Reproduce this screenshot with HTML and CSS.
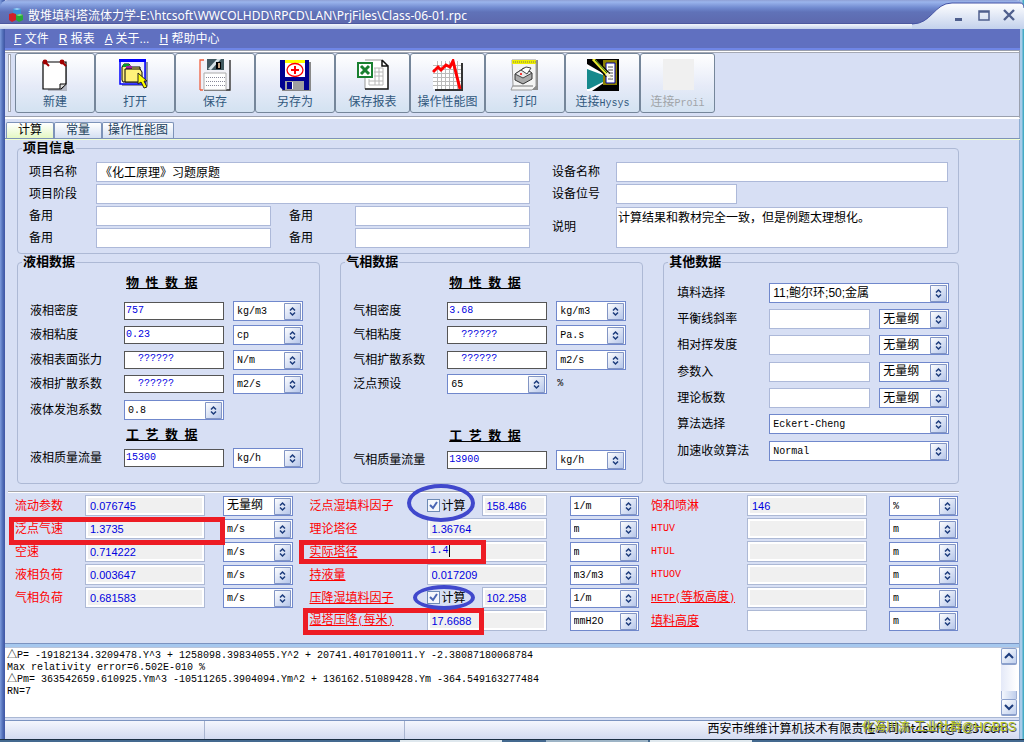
FILE: index.html
```html
<!DOCTYPE html>
<html lang="zh-CN">
<head>
<meta charset="utf-8">
<title>散堆填料塔流体力学</title>
<link rel="stylesheet" href="styles.css">
</head>
<body>
<div class="window">
  <header class="titlebar">
    <svg class="app-icon" width="16" height="16" viewBox="0 0 16 16" aria-hidden="true"><path d="M5 2l4-1 4 1v5l-4 2-4-2z" fill="#3c8fd8"/><path d="M5 2l4 1 4-1-4-1z" fill="#9ed0f5"/><path d="M1 7l4-1 3 1v6l-4 2-3-2z" fill="#d02028"/><path d="M8 8l4-1 3 1v5l-4 2-3-2z" fill="#28a838"/><path d="M8 8l4-1 3 1-4 1z" fill="#8be08b"/></svg>
    <h1 class="title">散堆填料塔流体力学-E:\htcsoft\WWCOLHDD\RPCD\LAN\PrjFiles\Class-06-01.rpc</h1>
    <div class="captions">
      <svg class="caption-shape" width="112" height="29" viewBox="0 0 112 29" aria-hidden="true"><defs><linearGradient id="cap" x1="0" y1="0" x2="0" y2="1"><stop offset="0" stop-color="#fff"/><stop offset="1" stop-color="#c3d1ec"/></linearGradient></defs><path d="M0 24C20 24 22 3 40 3H108Q112 3 112 8V29H0z" fill="url(#cap)"/><path d="M0 24C20 24 22 3 40 3H108Q112 3 112 8" fill="none" stroke="#4453a4"/></svg>
      <button class="cap-btn" aria-label="最小化"><svg width="14" height="14"><path d="M3 9h7v3H3z" fill="#4f5f8d"/></svg></button>
      <button class="cap-btn" aria-label="最大化"><svg width="14" height="14"><path d="M2 2h10v9H2zM2 3h10" fill="none" stroke="#4f5f8d" stroke-width="1.5"/></svg></button>
      <button class="cap-btn" aria-label="关闭"><svg width="14" height="14"><path d="M2 1l10 10M12 1L2 11" stroke="#4f5f8d" stroke-width="2.4"/></svg></button>
    </div>
  </header>

  <nav class="menu">
    <a href="#"><u>F</u> 文件</a><a href="#"><u>R</u> 报表</a><a href="#"><u>A</u> 关于...</a><a href="#"><u>H</u> 帮助中心</a>
  </nav>

  <div class="toolbar">
    <span class="grip"></span>
    <button class="tool">
      <svg width="32" height="32" viewBox="0 0 32 32"><path d="M7 6h21v26H9z" fill="#b4b8c4"/><path d="M4 3h23v22l-5 5H4z" fill="#fff" stroke="#000" stroke-width="1.2"/><path d="M21 30v-5h6" fill="#ddd" stroke="#000"/><circle cx="6" cy="3" r="2.4" fill="#a00000"/><circle cx="23" cy="3" r="2.4" fill="#a00000"/><path d="M7 4l3 3M24 4l3 3" stroke="#a00000" stroke-width="2"/></svg>新建</button>
    <button class="tool">
      <svg width="32" height="32" viewBox="0 0 32 32"><path d="M3 3h26v24H3z" fill="#9094a0"/><path d="M1 1h25v24H1z" fill="#eef" stroke="#00f" stroke-width="1.5"/><path d="M0 0h27v3H0z" fill="#00f"/><path d="M3 21V8l2-3h5l2 3h9v15H4z" fill="#ffef80" stroke="#000"/><path d="M4 5h6v3H4z" fill="#0a9a30"/><path d="M7 7h6v3H7z" fill="#a020a0"/><path d="M6 10h15l2 3v10H6z" fill="#fff27a" stroke="#000"/><path d="M19 14l9 8-3 0 3 6-3 1-3-6-3 2z" fill="#ff0" stroke="#222"/></svg>打开</button>
    <button class="tool">
      <svg width="32" height="32" viewBox="0 0 32 32"><path d="M1 1h31v31H3z" fill="#f2f2f8"/><path d="M1 31V1h4M1 31h3" fill="none" stroke="#f06040" stroke-width="1.3"/><path d="M31 1v30H5" fill="none" stroke="#222" stroke-width="1.3"/><path d="M8 0h17v11H8z" fill="#405860"/><path d="M9 10l9-10h4L12 11z" fill="#d8e4e8"/><path d="M17 3h5v7h-5z" fill="#000"/><path d="M19 4h2v5h-2z" fill="#c8a888"/><path d="M5 14h22v17H5z" fill="#fff" stroke="#aaa"/><path d="M7 18.500h19M7 22.500h19M7 26.500h19" stroke="#889" stroke-dasharray="1 1"/></svg>保存</button>
    <button class="tool">
      <svg width="32" height="32" viewBox="0 0 32 32"><path d="M3 3h29v29H3z" fill="#888"/><path d="M1 1h29v30H4l-3-3z" fill="#000090"/><path d="M6 1h20v17H6z" fill="#fff"/><path d="M6 1h20v3H6z" fill="#ff0"/><ellipse cx="16" cy="11" rx="8" ry="6.5" fill="#fff" stroke="#f00" stroke-width="1.3"/><path d="M16 7v8M12 11h8" stroke="#f00" stroke-width="2"/><path d="M6 22h19v9H6z" fill="#a0a0a0"/><path d="M8 23h5v7H8z" fill="#000090"/><path d="M13 23h1v7h-1z" fill="#fff"/></svg>另存为</button>
    <button class="tool narrow">
      <svg width="32" height="32" viewBox="0 0 32 32"><path d="M8 1h17l6 6v23H8z" fill="#fff"/><path d="M8 1h17M8 18v12" stroke="#999"/><path d="M25 1v6h6v23H8M25 1l6 6" fill="none" stroke="#111" stroke-width="1.5"/><path d="M17 9h9v17H12v-6M17 13h9M17 17h9M12 22h14M18 9v17M22 9v17" fill="none" stroke="#b8b8b8"/><path d="M1 4h14v14H1z" fill="#fff" stroke="#198030" stroke-width="2"/><path d="M4 7l8 8M12 7l-8 8" stroke="#198030" stroke-width="3"/></svg>保存报表</button>
    <button class="tool narrow">
      <svg width="32" height="32" viewBox="0 0 32 32"><path d="M3 4h28v28H3z" fill="#333"/><path d="M1 2h28v28H1z" fill="#fff"/><path d="M1 6.500h28M1 10.500h28M1 14.500h28M1 18.500h28M1 22.500h28M1 26.500h28M5.500 2v28M9.500 2v28M13.500 2v28M17.500 2v28M21.500 2v28M25.500 2v28" stroke="#bbb"/><path d="M1 13l5-5 3 3 5-5 4 2 3-6 7 28" fill="none" stroke="#f00" stroke-width="3"/></svg>操作性能图</button>
    <button class="tool">
      <svg width="32" height="32" viewBox="0 0 32 32"><path d="M4 1h25v30H8z" fill="#8c8c8c"/><path d="M3 1h24v26l-4 4H2l2-5z" fill="#f4f4f4" stroke="#999"/><path d="M3 1h24v4H3z" fill="#ee0"/><path d="M4 3h23" stroke="#776" stroke-dasharray="1 1"/><path d="M6 15l9-6 8 5v6l-9 5-8-4z" fill="#aaa" stroke="#333"/><path d="M6 15l8 4 9-5-8-5z" fill="#e8e8e8" stroke="#444"/><path d="M12 11l5-3 5 1-4 6z" fill="#fff" stroke="#444"/><circle cx="12" cy="15" r="1" fill="#f00"/><path d="M4 27h20" stroke="#777"/></svg>打印</button>
    <button class="tool narrow">
      <svg width="32" height="32" viewBox="0 0 32 32"><path d="M0 0h32v32H0z" fill="#000"/><path d="M0 5l24 14L5 32H0z" fill="#fff"/><path d="M0 10l24 9L2 30H0z" fill="#16898c"/><path d="M16 1h14v25H16z" fill="#8c8000"/><path d="M19 4h9v20h-9z" fill="#fff" stroke="#0000a0"/><path d="M21 8h5M21 11h5M21 14h5M21 17h5M21 20h5" stroke="#555"/><path d="M5 0l16 16" stroke="#000" stroke-width="6"/><path d="M6 0l14 15" stroke="#eee830" stroke-width="3"/><path d="M8 1l12 13" stroke="#186820"/><path d="M18 16l3-3 4 7z" fill="#f4f0d0"/></svg><span>连接<span class="mono">Hysys</span></span></button>
    <button class="tool narrow" disabled>
      <svg width="32" height="32" viewBox="0 0 32 32"><path d="M1 0h31v31H1z" fill="#f0f0f0"/></svg><span>连接<span class="mono">Proii</span></span></button>
  </div>

  <div class="tabs" role="tablist">
    <button class="tab active" role="tab">计算</button><button class="tab" role="tab">常量</button><button class="tab wide" role="tab">操作性能图</button>
  </div>

  <main class="page">
    <fieldset class="group project">
      <legend>项目信息</legend>
      <div class="project-grid">
        <label for="p1">项目名称</label><input class="box long" id="p1" value="《化工原理》习题原题">
        <label class="c7" for="p2">设备名称</label><input class="box c8" id="p2">
        <label for="p3">项目阶段</label><input class="box long" id="p3">
        <label class="c7" for="p4">设备位号</label><input class="box c8 short" id="p4">
        <label for="p5">备用</label><input class="box" id="p5">
        <label class="c4" for="p6">备用</label><input class="box" id="p6">
        <label class="c7 two" for="p9">说明</label><textarea class="box c8 two" id="p9">计算结果和教材完全一致，但是例题太理想化。</textarea>
        <label for="p7">备用</label><input class="box" id="p7">
        <label class="c4" for="p8">备用</label><input class="box" id="p8">
      </div>
    </fieldset>

    <div class="groups">
      <fieldset class="group">
        <legend>液相数据</legend>
        <div class="fields liquid">
          <h2>物&ensp;性&ensp;数&ensp;据</h2>
          <label for="l1">液相密度</label><input class="num" id="l1" value="757"><select aria-label="液相密度单位"><option>kg/m3</option></select>
          <label for="l2">液相粘度</label><input class="num" id="l2" value="0.23"><select aria-label="液相粘度单位"><option>cp</option></select>
          <label for="l3">液相表面张力</label><input class="num unknown" id="l3" value="??????"><select aria-label="液相表面张力单位"><option>N/m</option></select>
          <label for="l4">液相扩散系数</label><input class="num unknown" id="l4" value="??????"><select aria-label="液相扩散系数单位"><option>m2/s</option></select>
          <label for="l5">液体发泡系数</label><select id="l5"><option>0.8</option></select>
          <h2>工&ensp;艺&ensp;数&ensp;据</h2>
          <label for="l6">液相质量流量</label><input class="num" id="l6" value="15300"><select aria-label="液相质量流量单位"><option>kg/h</option></select>
        </div>
      </fieldset>
      <fieldset class="group">
        <legend>气相数据</legend>
        <div class="fields gas">
          <h2>物&ensp;性&ensp;数&ensp;据</h2>
          <label for="g1">气相密度</label><input class="num" id="g1" value="3.68"><select aria-label="气相密度单位"><option>kg/m3</option></select>
          <label for="g2">气相粘度</label><input class="num unknown" id="g2" value="??????"><select aria-label="气相粘度单位"><option>Pa.s</option></select>
          <label for="g3">气相扩散系数</label><input class="num unknown" id="g3" value="??????"><select aria-label="气相扩散系数单位"><option>m2/s</option></select>
          <label for="g4">泛点预设</label><select id="g4"><option>65</option></select><span class="mono percent">%</span>
          <h2>工&ensp;艺&ensp;数&ensp;据</h2>
          <label for="g5">气相质量流量</label><input class="num" id="g5" value="13900"><select aria-label="气相质量流量单位"><option>kg/h</option></select>
        </div>
      </fieldset>
      <fieldset class="group other-group">
        <legend>其他数据</legend>
        <div class="fields other">
          <label for="o1">填料选择</label><select class="wide cjk" id="o1"><option>11;鲍尔环;50;金属</option></select>
          <label for="o2">平衡线斜率</label><input class="box" id="o2"><select class="cjk" aria-label="平衡线斜率单位"><option>无量纲</option></select>
          <label for="o3">相对挥发度</label><input class="box" id="o3"><select class="cjk" aria-label="相对挥发度单位"><option>无量纲</option></select>
          <label for="o4">参数入</label><input class="box" id="o4"><select class="cjk" aria-label="参数入单位"><option>无量纲</option></select>
          <label for="o5">理论板数</label><input class="box" id="o5"><select class="cjk" aria-label="理论板数单位"><option>无量纲</option></select>
          <label for="o6">算法选择</label><select class="wide" id="o6"><option>Eckert-Cheng</option></select>
          <label for="o7">加速收敛算法</label><select class="wide" id="o7"><option>Normal</option></select>
        </div>
      </fieldset>
    </div>

    <section class="results">
      <div class="res first">
        <label for="r1">流动参数</label><input class="out" id="r1" readonly value="0.076745"><select class="cjk" aria-label="流动参数单位"><option>无量纲</option></select>
        <label for="r2">泛点气速</label><input class="out" id="r2" readonly value="1.3735"><select aria-label="泛点气速单位"><option>m/s</option></select>
        <label for="r3">空速</label><input class="out" id="r3" readonly value="0.714222"><select aria-label="空速单位"><option>m/s</option></select>
        <label for="r4">液相负荷</label><input class="out" id="r4" readonly value="0.003647"><select aria-label="液相负荷单位"><option>m/s</option></select>
        <label for="r5">气相负荷</label><input class="out" id="r5" readonly value="0.681583"><select aria-label="气相负荷单位"><option>m/s</option></select>
      </div>
      <div class="res second">
        <label for="s1">泛点湿填料因子</label><div class="calc"><label class="check"><input type="checkbox" checked>计算</label><input class="out" id="s1" readonly value="158.486"></div><select aria-label="泛点湿填料因子单位"><option>1/m</option></select>
        <label for="s2">理论塔径</label><input class="out" id="s2" readonly value="1.36764"><select aria-label="理论塔径单位"><option>m</option></select>
        <label for="s3"><u>实际塔径</u></label><div class="editing"><input class="out typed" id="s3" value="1.4"><span class="caret"></span></div><select aria-label="实际塔径单位"><option>m</option></select>
        <label for="s4"><u>持液量</u></label><input class="out" id="s4" readonly value="0.017209"><select aria-label="持液量单位"><option>m3/m3</option></select>
        <label for="s5"><u>压降湿填料因子</u></label><div class="calc"><label class="check"><input type="checkbox" checked>计算</label><input class="out" id="s5" readonly value="102.258"></div><select aria-label="压降湿填料因子单位"><option>1/m</option></select>
        <label for="s6"><u>湿塔压降<span class="mono">(</span>每米<span class="mono">)</span></u></label><input class="out" id="s6" readonly value="17.6688"><select aria-label="湿塔压降单位"><option>mmH2O</option></select>
      </div>
      <div class="res third">
        <label for="t1">饱和喷淋</label><input class="out" id="t1" readonly value="146"><select aria-label="饱和喷淋单位"><option>%</option></select>
        <label class="mono" for="t2">HTUV</label><input class="out" id="t2" readonly><select aria-label="HTUV单位"><option>m</option></select>
        <label class="mono" for="t3">HTUL</label><input class="out" id="t3" readonly><select aria-label="HTUL单位"><option>m</option></select>
        <label class="mono" for="t4">HTUOV</label><input class="out" id="t4" readonly><select aria-label="HTUOV单位"><option>m</option></select>
        <label for="t5"><u><span class="mono">HETP(</span>等板高度<span class="mono">)</span></u></label><input class="out" id="t5" readonly><select aria-label="等板高度单位"><option>m</option></select>
        <label for="t6"><u>填料高度</u></label><input class="out blank" id="t6"><select aria-label="填料高度单位"><option>m</option></select>
      </div>
      <span class="mark m1"></span><span class="mark m2"></span><span class="mark m3"></span>
      <span class="ring r1"></span><span class="ring r2"></span>
    </section>
  </main>

  <div class="log">
    <textarea class="log-text" aria-label="输出" readonly>△P= -19182134.3209478.Y^3 + 1258098.39834055.Y^2 + 20741.4017010011.Y -2.38087180068784
Max relativity error=6.502E-010 %
△Pm= 363542659.610925.Ym^3 -10511265.3904094.Ym^2 + 136162.51089428.Ym -364.549163277484
RN=7</textarea>
    <div class="scroll">
      <button class="arrow" aria-label="向上"><svg width="10" height="8"><path d="M1 6l4-4 4 4" fill="none" stroke="#1d3c7c" stroke-width="2"/></svg></button>
      <span class="thumb"></span>
      <button class="arrow" aria-label="向下"><svg width="10" height="8"><path d="M1 2l4 4 4-4" fill="none" stroke="#1d3c7c" stroke-width="2"/></svg></button>
    </div>
  </div>

  <footer class="status">
    <span class="pane"></span><span class="pane"></span>
    <span class="company">西安市维维计算机技术有限责任公司,htcsoft@163.com</span>
    <span class="stamp">化海川流-工业社群@HGBBS</span>
  </footer>
</div>
<div class="taskbar"><span></span><span class="next"></span><span></span></div>
</body>
</html>
```

FILE: styles.css
```css
* { box-sizing: border-box; }
body {
  margin: 0;
  min-height: 100vh;
  display: flex;
  flex-direction: column;
  background: #1c5a9a;
  font: 12px/16px "Liberation Sans", "Noto Sans CJK SC", sans-serif;
  color: #000;
}
button, input, select, textarea { font: inherit; color: inherit; margin: 0; border-radius: 0; min-width: 0; }
.mono { font-family: "Liberation Mono", "Noto Sans CJK SC", monospace; font-size: 10px; }

.window {
  flex: 1;
  display: flex;
  flex-direction: column;
  padding: 0 4px 0 5px;
  background: linear-gradient(90deg, #7d9bdc 0, #4d6ab4 3px, #4055a4 5px, #d7dff4 5px, #d7dff4 calc(100% - 5px), #7590bd calc(100% - 5px), #a9cbe9 calc(100% - 4px), #a9cbe9 calc(100% - 2px), #45aac5 calc(100% - 1px));
}

.titlebar {
  display: flex;
  align-items: flex-start;
  height: 29px;
  margin: 0 -4px 0 -5px;
  padding: 7px 0 0 8px;
  border-radius: 8px 8px 0 0;
  background: linear-gradient(#8f9fd4 0, #9ab4ec 2px, #6f88ce 8px, #6072b8 12px, #5d69ae 23px, #3c4890 24px, #f4f7fd 24px, #c3d1ec 29px);
  position: relative;
}
.app-icon { margin-right: 4px; }
.title {
  flex: 1;
  margin: 0;
  font: 12px/17px "Noto Sans", "Noto Sans CJK SC", sans-serif;
  color: #fff;
  white-space: nowrap;
}
.captions { display: flex; gap: 11px; padding: 2px 8px 0 0; }
.caption-shape { position: absolute; right: 0; top: 0; }
.cap-btn { position: relative; width: 14px; height: 14px; padding: 0; border: 0; background: none; }
.cap-btn svg { display: block; }

.menu {
  display: flex;
  gap: 10px;
  height: 21px;
  padding: 2px 9px 0;
  background: #6070c0;
  border-bottom: 2px solid #6f86e6;
}
.menu a { color: #fff; text-decoration: none; }

.toolbar {
  display: flex;
  height: 69px;
  padding: 2px 3px 5px;
  border: 1px solid #9aa0ae;
  border-left: 0;
  border-bottom-width: 2px;
  border-bottom-color: #fff;
  box-shadow: inset 0 1px 0 #fff, inset 0 2px 0 #a5a9b4, inset 0 -1px 0 #9aa0ae;
}
.grip { width: 3px; margin: 1px 4px 0 0; border: 1px solid #a4a8b2; background: #fff; }
.tool {
  display: flex;
  flex-direction: column;
  align-items: center;
  width: 80px;
  height: 60px;
  padding: 5px 0 0;
  border: 1px solid #75869a;
  border-radius: 3px;
  background: linear-gradient(#fff, #e6ebf8 55%, #d3e2f1);
  color: #31587d;
  white-space: nowrap;
}
.tool.narrow { width: 75px; }
.tool svg { margin-bottom: 3px; flex: none; }
.tool:disabled { color: #a0a4a8; }

.tabs { display: flex; align-items: flex-end; height: 20px; padding-left: 1px; border-bottom: 1px solid #7d93b8; box-shadow: 0 1px 0 #f0ffd0; }
.tab { width: 48px; height: 16px; padding: 0; border: 1px solid #7d93b8; border-bottom: 0; border-radius: 2px 2px 0 0; background: linear-gradient(#fff, #d5e0f2); color: #20405c; line-height: 15px; }
.tab.active { background: linear-gradient(#fff, #e4f8c4); color: #000; }
.tab.wide { width: 72px; }

.page { padding: 1px 61px 11px 3px; }
.group {
  flex: 303 1 0;
  min-width: 0;
  margin: 0;
  padding: 0 9px 0 12px;
  border: 1px solid #adb9d5;
  border-radius: 4px;
}
.other-group { flex-grow: 295; }
.group legend { height: 16px; margin-left: -8px; padding: 0 1px; font-weight: bold; font-size: 13px; line-height: 16px; }
.project { margin-left: 9px; padding: 5px 10px 4px 11px; }
.project legend { margin-left: -7px; }
.project-grid { display: grid; grid-template-columns: 67px 175fr 18px 66px 175fr 22px 64px 332fr; grid-auto-rows: 22px; align-items: center; }
.project-grid > label:not([class]) { grid-column: 1; }
.long { grid-column: 2 / 6; }
.c4 { grid-column: 4; }
.c7 { grid-column: 7; }
.c8 { grid-column: 8; }
.project-grid .two { grid-row: 3 / 5; }

.box { width: 100%; height: 20px; padding: 0 3px 2px; border: 1px solid #adb9d9; background: #fff; }
.box.short { width: 121px; }
textarea.box { height: 41px; padding: 2px 1px; resize: none; overflow: hidden; display: block; }

.groups { display: flex; gap: 20px; margin-left: 9px; }
.groups .group { min-height: 230px; }
.fields { display: grid; grid-template-columns: 85px 100fr 70fr; column-gap: 9px; align-items: center; padding-right: 7px; }
.liquid { grid-template-rows: 29px 24px 24px 25px 24px 28px 24px 20px; }
.gas { grid-template-rows: 29px 24px 24px 25px 24px 29px 24px 22px; }
.gas h2 ~ h2 { grid-row: 7; }
.gas h2 ~ h2 ~ * { grid-row: 8; }
.other { grid-template-columns: 83px 100fr 69fr; grid-template-rows: 26px 26px 26px 27px 26px 26px 27px; padding: 10px 0 0 1px; }
.fields > label { grid-column: 1; white-space: nowrap; }
.fields h2 { grid-column: 2 / 4; margin: 0; padding: 0 0 3px 2px; font-size: 13px; line-height: 16px; text-decoration: underline; }
.fields .wide { grid-column: 2 / 4; }
.percent { padding-left: 1px; }

.num { width: 100%; height: 18px; padding: 0 1px 2px; border: 1px solid #555; background: #fff; color: #0000e0; font-family: "Liberation Mono", monospace; font-size: 10px; }
.unknown { padding-left: 13px; }

select {
  appearance: none;
  width: 100%;
  height: 20px;
  padding: 1px 20px 0 3px;
  border: 1px solid #7088cc;
  background: #fff url("data:image/svg+xml,%3Csvg xmlns='http://www.w3.org/2000/svg' width='18' height='18'%3E%3ClinearGradient id='g' x2='1' y2='1'%3E%3Cstop stop-color='%23fff'/%3E%3Cstop offset='1' stop-color='%23b4c5ea'/%3E%3C/linearGradient%3E%3Cpath d='M.5 1.5h16v16H.5z' fill='url(%23g)' stroke='%238295c4'/%3E%3Cpath d='M6 8.500l2.500-2.500 2.500 2.500M6 10.500l2.500 2.500 2.500-2.500' fill='none' stroke='%231d3c7c' stroke-width='1.500'/%3E%3C/svg%3E") no-repeat right center;
  font-family: "Liberation Mono", "Noto Sans CJK SC", monospace;
  font-size: 10px;
  line-height: 17px;
}
select.cjk { padding-top: 0; font-size: 12px; font-family: "Liberation Sans", "Noto Sans CJK SC", sans-serif; }

.results {
  position: relative;
  display: flex;
  justify-content: space-between;
  margin-top: 7px;
  padding: 2px 1px 0 7px;
  border-top: 1px solid #a4a6ac;
  box-shadow: inset 0 1px 0 #fff;
}
.res { display: grid; grid-auto-rows: 23px; align-items: center; align-content: start; }
.res > label { color: #f00; white-space: nowrap; }
.first { grid-template-columns: 70px 138px 70px; }
.second { grid-template-columns: 117px 143px 69px; padding-left: 4px; }
.third { grid-template-columns: 96px 142px 69px; }
.out { width: 120px; height: 21px; padding: 0 4px; border: 1px solid #adb9d5; background: #f0f0f0; box-shadow: inset 0 0 0 2px #fff; color: #0000e0; font-size: 11px; }
.out.blank { background: #fff; }
.out.typed { padding: 0 3px 2px; font-family: "Liberation Mono", monospace; font-size: 10px; }
.calc { display: flex; align-items: center; width: 120px; }
.calc .out { flex: 1; }
.check { display: flex; align-items: center; gap: 2px; width: 55px; }
.check input {
  appearance: none;
  width: 13px;
  height: 13px;
  border: 1px solid #6e8bb5;
  background: #f4f7fc url("data:image/svg+xml,%3Csvg xmlns='http://www.w3.org/2000/svg' width='11' height='11'%3E%3Cpath d='M2 5l3 3 4-6' fill='none' stroke='%234a66b4' stroke-width='2'/%3E%3C/svg%3E") center;
}
.editing { position: relative; width: 120px; }
.editing .out { display: block; }
.caret { position: absolute; left: 22px; top: 3px; width: 1px; height: 13px; background: #000; }

.mark { position: absolute; border: 5px solid #ed1c24; }
.m1 { left: 1px; top: 25px; width: 216px; height: 28px; }
.m2 { left: 291px; top: 48px; width: 187px; height: 24px; }
.m3 { left: 295px; top: 116px; width: 181px; height: 27px; }
.ring { position: absolute; border: 4px solid #4048cc; border-radius: 50%; }
.r1 { left: 399px; top: -8px; width: 68px; height: 38px; }
.r2 { left: 405px; top: 93px; width: 62px; height: 25px; }

.log { flex: 1; display: flex; min-height: 74px; border-top: 1px solid #7b93c0; border-bottom: 1px solid #aab8d4; margin: 0 1px 2px 0; padding: 4px 2px 1px 0; background: linear-gradient(#a6c8ee 3px, #b9c4da 3px, #b9c4da 4px, #fff 4px); }
.log-text { flex: 1; padding: 2px; border: 0; background: none; resize: none; overflow: hidden; font: 10px/12px "Liberation Mono", "Noto Sans CJK SC", monospace; }
.scroll { display: flex; flex-direction: column; width: 16px; background: linear-gradient(90deg, #e4e9f8, #fff); }
.arrow { height: 17px; padding: 0; border: 1px solid #8ba0cc; border-bottom-width: 2px; border-radius: 2px; background: linear-gradient(135deg, #fff, #c0d0ee); line-height: 8px; }
.thumb { height: 8px; margin-top: auto; border: 1px solid #a0b0d4; border-width: 0 1px; background: linear-gradient(90deg, #f4f7fd, #c0cfec); }

.status { position: relative; display: flex; height: 19px; margin-right: 1px; border-top: 1px solid #7b93c0; background: linear-gradient(#f4f6fd, #d3dbf1); }
.pane { width: 200px; border-right: 1px solid #a8b4d0; }
.company { margin-left: auto; padding-right: 10px; white-space: nowrap; font-family: "DejaVu Sans", "Noto Sans CJK SC", sans-serif; }
.stamp { position: absolute; right: 3px; top: -2px; color: #b8cc20; text-shadow: 1px 1px 0 #556; white-space: nowrap; }

.taskbar { display: flex; height: 3px; padding-left: 400px; background: #44698f; border-top: 1px solid #1c3044; }
.taskbar span { width: 102px; margin-right: 2px; background: #dfe8ee; }
.taskbar .next { margin-left: 42px; background: #9db4c6; }
```
